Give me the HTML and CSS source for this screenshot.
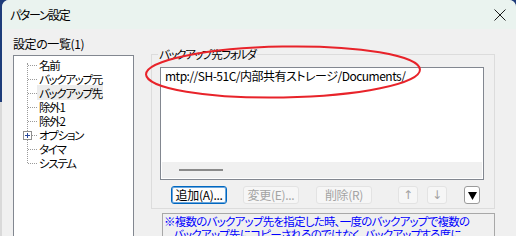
FILE: index.html
```html
<!DOCTYPE html>
<html lang="ja">
<head>
<meta charset="utf-8">
<title>パターン設定</title>
<link rel="stylesheet" href="styles.css">
</head>
<body>
<div class="window">
  <div class="titlebar">
    <span class="title">パターン設定</span>
    <svg class="close" width="12" height="12" viewBox="0 0 12 12"><path d="M0.5 0.5L11.5 11.5M11.5 0.5L0.5 11.5" stroke="#1a1a1a" stroke-width="1"/></svg>
  </div>
  <div class="content">
    <div class="left">
      <div class="label">設定の一覧(1)</div>
      <div class="tree">
        <ul>
          <li><span class="node">名前</span></li>
          <li><span class="node">バックアップ元</span></li>
          <li><span class="node sel">バックアップ先</span></li>
          <li><span class="node">除外1</span></li>
          <li><span class="node">除外2</span></li>
          <li class="expandable"><span class="plus"></span><span class="node">オプション</span></li>
          <li><span class="node">タイマ</span></li>
          <li><span class="node">システム</span></li>
        </ul>
      </div>
    </div>
    <div class="right">
      <fieldset class="group">
        <legend>バックアップ先フォルダ</legend>
        <div class="listbox">
          <div class="items">
            <div class="item">mtp://SH-51C/内部共有ストレージ/Documents/</div>
          </div>
          <div class="hscroll"><div class="thumb"></div></div>
        </div>
        <div class="buttons">
          <button class="btn primary b-wide first">追加(A)...</button>
          <button class="btn b-wide gap16">変更(E)...</button>
          <button class="btn b-wide gap17">削除(R)</button>
          <button class="btn b-arrow gap26">↑</button>
          <button class="btn b-arrow gap9">↓</button>
          <button class="btn dropdown gap17"><svg width="9" height="9" viewBox="0 0 9 9"><polygon points="0,1 9,1 4.5,9" fill="#000"/></svg></button>
        </div>
      </fieldset>
      <div class="note">
        <div>※複数のバックアップ先を指定した時、一度のバックアップで複数の</div>
        <div class="indent">バックアップ先にコピーされるのではなく、バックアップする度に</div>
      </div>
    </div>
  </div>
</div>
<svg class="annot" width="516" height="236" viewBox="0 0 516 236">
  <ellipse cx="283" cy="72" rx="137" ry="25.5" transform="rotate(-1 283 72)" fill="none" stroke="#e8232a" stroke-width="2"/>
</svg>
</body>
</html>
```
FILE: styles.css
```css
* { box-sizing: border-box; }
html, body { margin: 0; padding: 0; }
body {
  position: relative;
  width: 516px;
  height: 236px;
  overflow: hidden;
  background: linear-gradient(#1e3c7a 0 102px, #d9d9d9 102px);
  font-family: "Noto Sans CJK JP", "Noto Sans", sans-serif;
  font-size: 12px;
  color: #000;
  font-feature-settings: "palt";
}
.window {
  margin-left: 2px;
  width: 514px;
  height: 236px;
  background: #f0f0f0;
  border-top-left-radius: 7px;
  border-top-right-radius: 7px;
  overflow: hidden;
}
.titlebar {
  height: 29px;
  background: #eaf3ef;
  display: flex;
  align-items: center;
  justify-content: space-between;
  padding: 0 10px 0 8px;
}
.title { line-height: 14px; letter-spacing: -1.4px; }
.close { display: block; }
.content { display: flex; align-items: flex-start; }
.left { padding-left: 11px; }
.label { margin-top: 8px; line-height: 14px; letter-spacing: -0.4px; }
.tree {
  margin-top: 4px;
  width: 121px;
  height: 200px;
  border: 1px solid #828790;
  background: #fff;
}
.tree ul {
  list-style: none;
  margin: 0;
  padding: 2px 0 0 0;
  position: relative;
}
.tree ul::before {
  content: "";
  position: absolute;
  left: 13px;
  top: 7px;
  height: 100px;
  border-left: 1px dotted #9a9a9a;
}
.tree li {
  position: relative;
  height: 14px;
  line-height: 14px;
  padding-left: 23px;
  white-space: nowrap;
}
.tree li::before {
  content: "";
  position: absolute;
  left: 14px;
  top: 7px;
  width: 9px;
  border-top: 1px dotted #9a9a9a;
}
.node {
  display: inline-block;
  padding: 0 1px 0 2px;
  line-height: 14px;
  font-size: 11.5px;
  letter-spacing: -1.3px;
}
.node.sel { background: #ececec; padding-top: 1px; margin-top: -1px; }
.plus {
  position: absolute;
  left: 9px;
  top: 3px;
  width: 9px;
  height: 9px;
  border: 1px solid #8f8f8f;
  background: #fff;
  z-index: 1;
}
.plus::before, .plus::after {
  content: "";
  position: absolute;
  background: #2a4a9c;
}
.plus::before { left: 1px; top: 3px; width: 5px; height: 1px; }
.plus::after { left: 3px; top: 1px; width: 1px; height: 5px; }

.right { margin-left: 17px; }
.group {
  margin: 18px 0 0 0;
  width: 344px;
  border: 1px solid #dcdcdc;
  padding: 6px 10px 4px 8px;
  min-inline-size: 0;
}
.group legend {
  padding: 0 1px;
  margin-left: -2px;
  line-height: 14px;
  font-size: 11.5px;
  letter-spacing: -1.4px;
}
.listbox {
  height: 113px;
  border: 1px solid #828790;
  background: #fff;
  display: flex;
  flex-direction: column;
  padding: 0 1px 1px 1px;
}
.items { flex: 1; padding: 1px 0 0 3px; }
.item { line-height: 14px; white-space: nowrap; letter-spacing: -0.5px; }
.hscroll { height: 16px; background: #f0f0f0; padding-top: 7px; }
.thumb { margin-left: 17px; width: 44px; height: 2px; background: #8a8a8a; }

.buttons { display: flex; margin-top: 6px; height: 18px; }
.btn {
  height: 18px;
  margin: 0;
  padding: 0;
  font-family: inherit;
  font-size: 12px;
  line-height: 16px;
  border: 1px solid #e3e3e3;
  border-radius: 3px;
  background: #f6f6f6;
  color: #a3a3a3;
  display: flex;
  align-items: center;
  justify-content: center;
  white-space: nowrap;
  letter-spacing: -0.3px;
}
.b-wide { width: 56px; }
.b-arrow { width: 20px; font-family: "DejaVu Sans", sans-serif; font-size: 12px; }
.primary { border: 1px solid #0067c0; box-shadow: inset 0 0 0 1px #6aa6dc; background: #fdfdfd; color: #000; }
.dropdown { width: 16px; background: #fff; border: 1px solid #9a9a9a; }
.dropdown svg { display: block; }
.first { margin-left: 11px; }
.gap16 { margin-left: 16px; }
.gap17 { margin-left: 17px; }
.gap26 { margin-left: 26px; }
.gap9 { margin-left: 9px; }

.note {
  margin: 4px 0 0 11px;
  width: 333px;
  height: 40px;
  border: 1px solid #a8a8a8;
  border-bottom: none;
  color: #0000ff;
  font-size: 11.5px;
  line-height: 13px;
  letter-spacing: -0.75px;
  padding: 1px 0 0 1px;
  white-space: nowrap;
  overflow: hidden;
}
.indent { padding-left: 9px; }

.annot { position: absolute; left: 0; top: 0; pointer-events: none; }
```
